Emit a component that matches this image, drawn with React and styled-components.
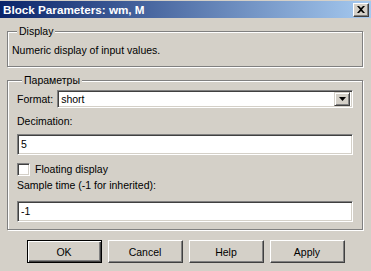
import React from "react";
import styled, { createGlobalStyle } from "styled-components";

const face = "#d4d0c8";

const Global = createGlobalStyle`
  html, body {
    margin: 0;
    padding: 0;
    background: ${face};
  }
`;

export default function App() {
  return (
    <Window>
      <Global />
      {/* Title bar */}
      <TitleBar>
        <Title>Block Parameters: wm, M</Title>
        <CloseButton>
          <svg width="8" height="7" viewBox="0 0 8 7">
            <path d="M0 0h2l2 2 2-2h2L5 3.5 8 7H6L4 5 2 7H0l3-3.5z" fill="#000" />
          </svg>
        </CloseButton>
      </TitleBar>

      {/* Display */}
      <Group $top={13}>
        <Legend>Display</Legend>
        <Description>Numeric display of input values.</Description>
      </Group>

      {/* Parameters */}
      <Group $top={13} $pad={9}>
        <Legend>Параметры</Legend>
        <FormatRow>
          <Label>Format:</Label>
          <Select>
            <SelectValue>short</SelectValue>
            <DropButton>
              <svg width="7" height="4" viewBox="0 0 7 4">
                <path d="M0 0h7L3.5 4z" fill="#000" />
              </svg>
            </DropButton>
          </Select>
        </FormatRow>

        <FieldLabel $gap={7}>Decimation:</FieldLabel>
        <TextBox $gap={6}>5</TextBox>

        <CheckRow>
          <CheckBox />
          <span>Floating display</span>
        </CheckRow>

        <FieldLabel $gap={3}>Sample time (-1 for inherited):</FieldLabel>
        <TextBox $gap={9}>-1</TextBox>
      </Group>

      {/* Buttons */}
      <Buttons>
        <Button $default>OK</Button>
        <Button>Cancel</Button>
        <Button>Help</Button>
        <Button>Apply</Button>
      </Buttons>
    </Window>
  );
}

const Window = styled.div`
  width: 371px;
  height: 271px;
  box-sizing: border-box;
  padding-top: 1px;
  background: ${face};
  font-family: "Liberation Sans", Arial, sans-serif;
  font-size: 10.5px;
  color: #000;
  display: flex;
  flex-direction: column;
  overflow: hidden;
`;

// - title bar
const TitleBar = styled.div`
  height: 17px;
  flex-shrink: 0;
  display: flex;
  align-items: center;
  justify-content: space-between;
  padding: 0 2px 0 3px;
  background: linear-gradient(to right, #0a246a, #a6caf0);
`;
const Title = styled.div`
  color: #fff;
  font-weight: bold;
  font-size: 11.7px;
  line-height: 17px;
`;
const CloseButton = styled.div`
  width: 16px;
  height: 14px;
  box-sizing: border-box;
  display: flex;
  align-items: center;
  justify-content: center;
  background: ${face};
  border: 1px solid;
  border-color: #fff #404040 #404040 #fff;
  box-shadow: inset -1px -1px 0 #808080;
`;

// - group boxes
const Group = styled.div`
  flex-shrink: 0;
  margin: ${(p) => p.$top}px 8px 0 7px;
  border: 1px solid #808080;
  box-shadow: 1px 1px 0 #fff, inset 1px 1px 0 #fff;
  padding: 0 ${(p) => p.$pad || 4}px ${(p) => (p.$pad ? 7 : 9)}px;
  display: flex;
  flex-direction: column;
  align-items: stretch;
`;
const Legend = styled.span`
  align-self: flex-start;
  margin: -7px 0 0 ${(p) => 5}px;
  padding: 0 2px;
  line-height: 13px;
  background: ${face};
`;
const Description = styled.div`
  margin-top: 6px;
  line-height: 13px;
`;

// - fields
const FormatRow = styled.div`
  margin-top: 3px;
  display: flex;
  align-items: center;
  gap: 4px;
`;
const Label = styled.span`
  line-height: 13px;
  white-space: nowrap;
`;
const FieldLabel = styled.div`
  margin-top: ${(p) => p.$gap}px;
  line-height: 13px;
`;
const sunken = `
  box-sizing: border-box;
  background: #fff;
  border: 1px solid;
  border-color: #808080 #fff #fff #808080;
  box-shadow: inset 1px 1px 0 #404040, inset -1px -1px 0 ${face};
`;
const Select = styled.div`
  ${sunken}
  flex: 1;
  height: 18px;
  padding: 2px;
  display: flex;
  align-items: center;
`;
const SelectValue = styled.span`
  flex: 1;
  padding-left: 1px;
  line-height: 14px;
`;
const DropButton = styled.div`
  width: 16px;
  height: 14px;
  box-sizing: border-box;
  display: flex;
  align-items: center;
  justify-content: center;
  background: ${face};
  border: 1px solid;
  border-color: ${face} #404040 #404040 ${face};
  box-shadow: inset 1px 1px 0 #fff, inset -1px -1px 0 #808080;
`;
const TextBox = styled.div`
  ${sunken}
  margin-top: ${(p) => p.$gap}px;
  height: 21px;
  padding: 0 3px;
  line-height: 19px;
`;
const CheckRow = styled.label`
  margin-top: 8px;
  display: flex;
  align-items: center;
  gap: 5px;
  line-height: 13px;
`;
const CheckBox = styled.span`
  ${sunken}
  width: 13px;
  height: 13px;
`;

// - buttons
const Buttons = styled.div`
  flex-shrink: 0;
  margin-top: 10px;
  display: flex;
  justify-content: center;
  gap: 6px;
`;
const Button = styled.div`
  width: 75px;
  height: 23px;
  box-sizing: border-box;
  display: flex;
  align-items: center;
  justify-content: center;
  background: ${face};
  border: 1px solid;
  border-color: ${(p) => (p.$default ? "#000" : "#fff #404040 #404040 #fff")};
  box-shadow: ${(p) =>
    p.$default
      ? "inset 1px 1px 0 #fff, inset -1px -1px 0 #404040, inset -2px -2px 0 #808080"
      : "inset -1px -1px 0 #808080"};
`;
